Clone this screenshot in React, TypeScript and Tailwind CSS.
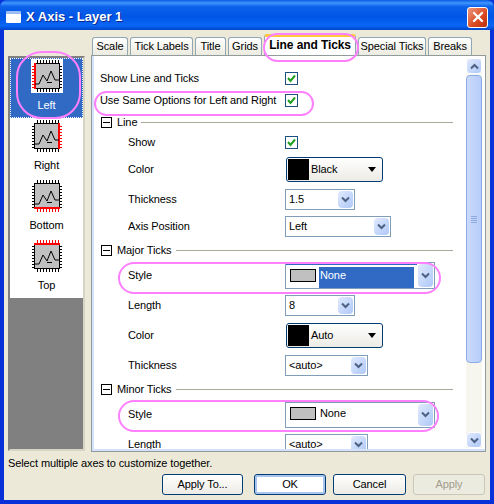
import React from 'react';
import { X } from 'lucide-react';

type Side = 'left' | 'right' | 'bottom' | 'top';

const ChipIcon: React.FC<{ side: Side }> = ({ side }) => {
  const pins = [6, 9, 12, 15, 18, 21, 24, 27];
  const color = (s: Side) => (s === side ? '#ff0000' : '#000000');
  return (
    <svg width="32" height="34" viewBox="0 0 32 34" className="block bg-white" shapeRendering="crispEdges">
      {pins.map((p) => (
        <g key={p}>
          <rect x={p} y="1" width="1" height="3" fill={color('top')} />
          <rect x={p} y="30" width="1" height="3" fill={color('bottom')} />
          <rect x="1" y={p + 1} width="3" height="1" fill={color('left')} />
          <rect x="28" y={p + 1} width="3" height="1" fill={color('right')} />
        </g>
      ))}
      <rect x="3.5" y="4.5" width="25" height="25" fill="#c0c0c0" stroke="#000" />
      {side === 'left' && <rect x="3" y="4" width="2" height="26" fill="#ff0000" />}
      {side === 'right' && <rect x="27" y="4" width="2" height="26" fill="#ff0000" />}
      {side === 'top' && <rect x="3" y="4" width="26" height="2" fill="#ff0000" />}
      {side === 'bottom' && <rect x="3" y="28" width="26" height="2" fill="#ff0000" />}
      <g shapeRendering="auto" fill="none" stroke="#000" strokeWidth="1">
        <polyline points="4,25 8,25 12,16 16,22 20,12 24,21 28,21" />
        <line x1="16" y1="23.5" x2="21" y2="23.5" />
      </g>
    </svg>
  );
};

const Check: React.FC = () => (
  <div className="w-[13px] h-[13px] border border-[#1c5180] bg-white flex items-center justify-center">
    <svg width="9" height="9" viewBox="0 0 9 9">
      <path d="M1 4 L3.5 7 L8 1.5" fill="none" stroke="#21a121" strokeWidth="2" />
    </svg>
  </div>
);

const Arrow: React.FC = () => (
  <svg width="9" height="7" viewBox="0 0 9 7">
    <path d="M1 1.5 L4.5 5 L8 1.5" fill="none" stroke="#4d6185" strokeWidth="2" />
  </svg>
);

const ComboArrow: React.FC = () => (
  <div className="w-[15px] shrink-0 self-stretch m-px rounded-sm bg-gradient-to-br from-[#e1eafe] to-[#aec8f7] flex items-center justify-center">
    <Arrow />
  </div>
);

const Combo: React.FC<{ text: string; w: string }> = ({ text, w }) => (
  <div className={`${w} h-[21px] border border-[#7f9db9] bg-white flex items-stretch`}>
    <span className="flex-1 pl-[3px] leading-[18px]">{text}</span>
    <ComboArrow />
  </div>
);

const ColorButton: React.FC<{ text: string }> = ({ text }) => (
  <div className="ml-px w-[97px] h-[25px] rounded-[3px] border border-[#003c74] bg-gradient-to-b from-white to-[#ecebe5] flex items-center p-px">
    <div className="w-[21px] h-[21px] bg-black" />
    <span className="ml-[2px] flex-1">{text}</span>
    <div className="w-0 h-0 mr-[5px] border-x-[4px] border-x-transparent border-t-[5px] border-t-black" />
  </div>
);

const StyleCombo: React.FC<{ text: string; selected?: boolean; h: string }> = ({ text, selected, h }) => (
  <div className={`w-[150px] ${h} border border-[#7f9db9] bg-white flex items-stretch`}>
    <div className={`flex-1 pt-[2px] pl-[1px] ${selected ? 'border-t-2 border-[#316ac5] pt-0' : ''}`}>
      <div className="flex items-start h-[19px]">
        <div className="w-[32px] flex justify-center pt-[2px]">
          <div className="w-[26px] h-[13px] border border-black bg-[#c0c0c0]" />
        </div>
        <span className={`h-[21px] flex-1 pl-[1px] ${selected ? 'bg-[#316ac5] text-white mr-[3px]' : ''}`}>{text}</span>
      </div>
    </div>
    <ComboArrow />
  </div>
);

const Row: React.FC<{ label: string; h: string; children?: React.ReactNode; top?: boolean }> = ({ label, h, children, top }) => (
  <div className={`${h} flex items-center`}>
    <span className={`w-[185px] whitespace-nowrap ${top ? '' : 'pl-[28px]'}`}>{label}</span>
    {children}
  </div>
);

const Section: React.FC<{ label: string; h: string }> = ({ label, h }) => (
  <div className={`${h} flex items-center pl-px pr-[13px]`}>
    <div className="w-[11px] h-[11px] border border-black flex items-center justify-center shrink-0">
      <div className="w-[7px] h-px bg-black" />
    </div>
    <span className="ml-[5px]">{label}</span>
    <div className="ml-[4px] flex-1 h-px bg-[#aca899]" />
  </div>
);

const Tab: React.FC<{ label: string; w: string }> = ({ label, w }) => (
  <div className={`${w} h-[18px] mr-[2px] rounded-t-[3px] border border-b-0 border-[#91a7b4] bg-gradient-to-b from-white to-[#ecebe0] text-center leading-[17px] whitespace-nowrap`}>
    {label}
  </div>
);

const Button: React.FC<{ label: string; w: string; focused?: boolean; disabled?: boolean }> = ({ label, w, focused, disabled }) => (
  <div
    className={`${w} h-[21px] rounded-[3px] border flex items-center justify-center ${
      disabled
        ? 'border-[#c9c7ba] bg-[#ecebe0] text-[#a19e8e]'
        : focused
          ? 'border-[#003c74] bg-white shadow-[inset_0_0_0_2px_#a9c4ef]'
          : 'border-[#003c74] bg-gradient-to-b from-white to-[#ecebe5]'
    }`}
  >
    {label}
  </div>
);

const Ring: React.FC<{ cls: string }> = ({ cls }) => (
  <div className={`absolute border-[2px] border-[#ff80ff] pointer-events-none ${cls}`} />
);

const axes: { label: string; side: Side }[] = [
  { label: 'Left', side: 'left' },
  { label: 'Right', side: 'right' },
  { label: 'Bottom', side: 'bottom' },
  { label: 'Top', side: 'top' },
];

export default function App() {
  return (
    <div className="relative w-[494px] h-[504px] flex flex-col overflow-hidden bg-[#0831d9] text-[11px] tracking-[-0.1px] text-black [font-family:'Liberation_Sans',sans-serif]">
      {/* Title bar */}
      <div className="h-[30px] shrink-0 rounded-t-[7px] bg-[linear-gradient(180deg,#0a5ce0_0%,#3f95ff_10%,#0d62eb_22%,#0055e5_55%,#0a66f5_85%,#0044c8_100%)] flex items-center pt-[4px] pl-[6px] pr-[6px]">
        <div className="w-[15px] h-[12px] bg-white border-t-[3px] border-[#9dbcf2] rounded-[1px] mr-[5px]" />
        <span className="flex-1 text-white font-bold text-[13px] tracking-normal [text-shadow:1px_1px_0_#0a2a90]">
          X Axis - Layer 1
        </span>
        <div className="w-[21px] h-[21px] rounded-[3px] border border-white bg-[linear-gradient(135deg,#ee9a80,#d9481f_60%,#b83010)] flex items-center justify-center">
          <X size={16} strokeWidth={3.5} color="#fff" />
        </div>
      </div>

      {/* Body */}
      <div className="flex-1 mx-[4px] mb-[4px] bg-[#ece9d8] flex flex-col pl-[5px] pr-[4px] min-h-0">
        <div className="flex h-[420px] pt-[4px] shrink-0">
          {/* Axis list */}
          <div className="w-[77px] -ml-[1px] mt-[22px] h-[395px] border-2 border-[#808080] border-b-[#d8d4c4] border-r-[#d8d4c4] bg-[#808080] flex flex-col shrink-0">
            {axes.map((a, i) => (
              <div
                key={a.label}
                className={`h-[60px] flex flex-col items-center pt-[1px] ${
                  i === 0 ? 'bg-[#316ac5] text-white outline-1 outline-dotted outline-white -outline-offset-1' : 'bg-white'
                }`}
              >
                <ChipIcon side={a.side} />
                <span className="mt-[5px] leading-[14px]">{a.label}</span>
              </div>
            ))}
          </div>

          <div className="ml-[6px] flex-1 flex flex-col min-w-0">
            {/* Tabs */}
            <div className="flex items-end h-[21px] pl-[1px] shrink-0">
              <Tab label="Scale" w="w-[36px]" />
              <Tab label="Tick Labels" w="w-[63px]" />
              <Tab label="Title" w="w-[31px]" />
              <Tab label="Grids" w="w-[34px]" />
              <div className="w-[92px] h-[21px] mr-[2px] rounded-t-[3px] border-x border-[#91a7b4] border-t-[3px] border-t-[#ffc73c] bg-white text-center font-bold text-[12px] leading-[17px] whitespace-nowrap">
                Line and Ticks
              </div>
              <Tab label="Special Ticks" w="w-[68px]" />
              <Tab label="Breaks" w="w-[44px]" />
            </div>

            {/* Panel */}
            <div className="h-[397px] border border-[#919b9c] bg-white flex shadow-[inset_2px_-2px_0_#d5e0fb] p-[2px]">
              <div className="flex-1 h-full overflow-hidden pl-[6px] pt-[9px] min-w-0">
                <Row label="Show Line and Ticks" h="h-[22px]" top><Check /></Row>
                <Row label="Use Same Options for Left and Right" h="h-[22px]" top><Check /></Row>
                <Section label="Line" h="h-[22px]" />
                <Row label="Show" h="h-[18px]"><Check /></Row>
                <Row label="Color" h="h-[36px]"><ColorButton text="Black" /></Row>
                <Row label="Thickness" h="h-[25px]"><Combo text="1.5" w="w-[70px]" /></Row>
                <Row label="Axis Position" h="h-[28px]"><Combo text="Left" w="w-[106px]" /></Row>
                <Section label="Major Ticks" h="h-[20px]" />
                <Row label="Style" h="h-[30px]"><StyleCombo text="None" selected h="h-[27px]" /></Row>
                <Row label="Length" h="h-[30px]"><Combo text="8" w="w-[70px]" /></Row>
                <Row label="Color" h="h-[30px]"><ColorButton text="Auto" /></Row>
                <Row label="Thickness" h="h-[31px]"><Combo text="<auto>" w="w-[83px]" /></Row>
                <Section label="Minor Ticks" h="h-[16px]" />
                <Row label="Style" h="h-[35px]"><StyleCombo text="None" h="h-[26px]" /></Row>
                <Row label="Length" h="h-[24px]"><Combo text="<auto>" w="w-[83px]" /></Row>
              </div>

              {/* Scrollbar */}
              <div className="w-[16px] mr-[1px] mb-[1px] bg-[#f6f6ee] flex flex-col shrink-0">
                <div className="h-[16px] rounded-sm bg-gradient-to-br from-[#e1eafe] to-[#aec8f7] border border-white flex items-center justify-center">
                  <div className="rotate-180 flex"><Arrow /></div>
                </div>
                <div className="mt-px h-[288px] rounded-sm border border-[#8aaae8] bg-gradient-to-r from-[#cbdafc] to-[#b7cdf9] flex flex-col items-center justify-center gap-px">
                  <div className="w-[6px] h-px bg-[#8ea9e0]" />
                  <div className="w-[6px] h-px bg-[#8ea9e0]" />
                  <div className="w-[6px] h-px bg-[#8ea9e0]" />
                  <div className="w-[6px] h-px bg-[#8ea9e0]" />
                </div>
                <div className="flex-1" />
                <div className="h-[16px] rounded-sm bg-gradient-to-br from-[#e1eafe] to-[#aec8f7] border border-white flex items-center justify-center">
                  <Arrow />
                </div>
              </div>
            </div>
          </div>
        </div>

        {/* Footer */}
        <div className="h-[24px] pt-[2px] -ml-[1px] flex items-center">Select multiple axes to customize together.</div>
        <div className="flex justify-end gap-[7px] pr-[1px]">
          <div className="mr-[4px]"><Button label="Apply To..." w="w-[81px]" /></div>
          <Button label="OK" w="w-[72px]" focused />
          <Button label="Cancel" w="w-[73px]" />
          <Button label="Apply" w="w-[72px]" disabled />
        </div>
      </div>

      {/* Annotation rings */}
      <Ring cls="left-[16px] top-[51px] w-[65px] h-[68px] rounded-[26px]" />
      <Ring cls="left-[94px] top-[91px] w-[220px] h-[25px] rounded-full" />
      <Ring cls="left-[263px] top-[33px] w-[96px] h-[29px] rounded-full" />
      <Ring cls="left-[118px] top-[262px] w-[323px] h-[32px] rounded-full" />
      <Ring cls="left-[118px] top-[400px] w-[321px] h-[32px] rounded-full" />
    </div>
  );
}
